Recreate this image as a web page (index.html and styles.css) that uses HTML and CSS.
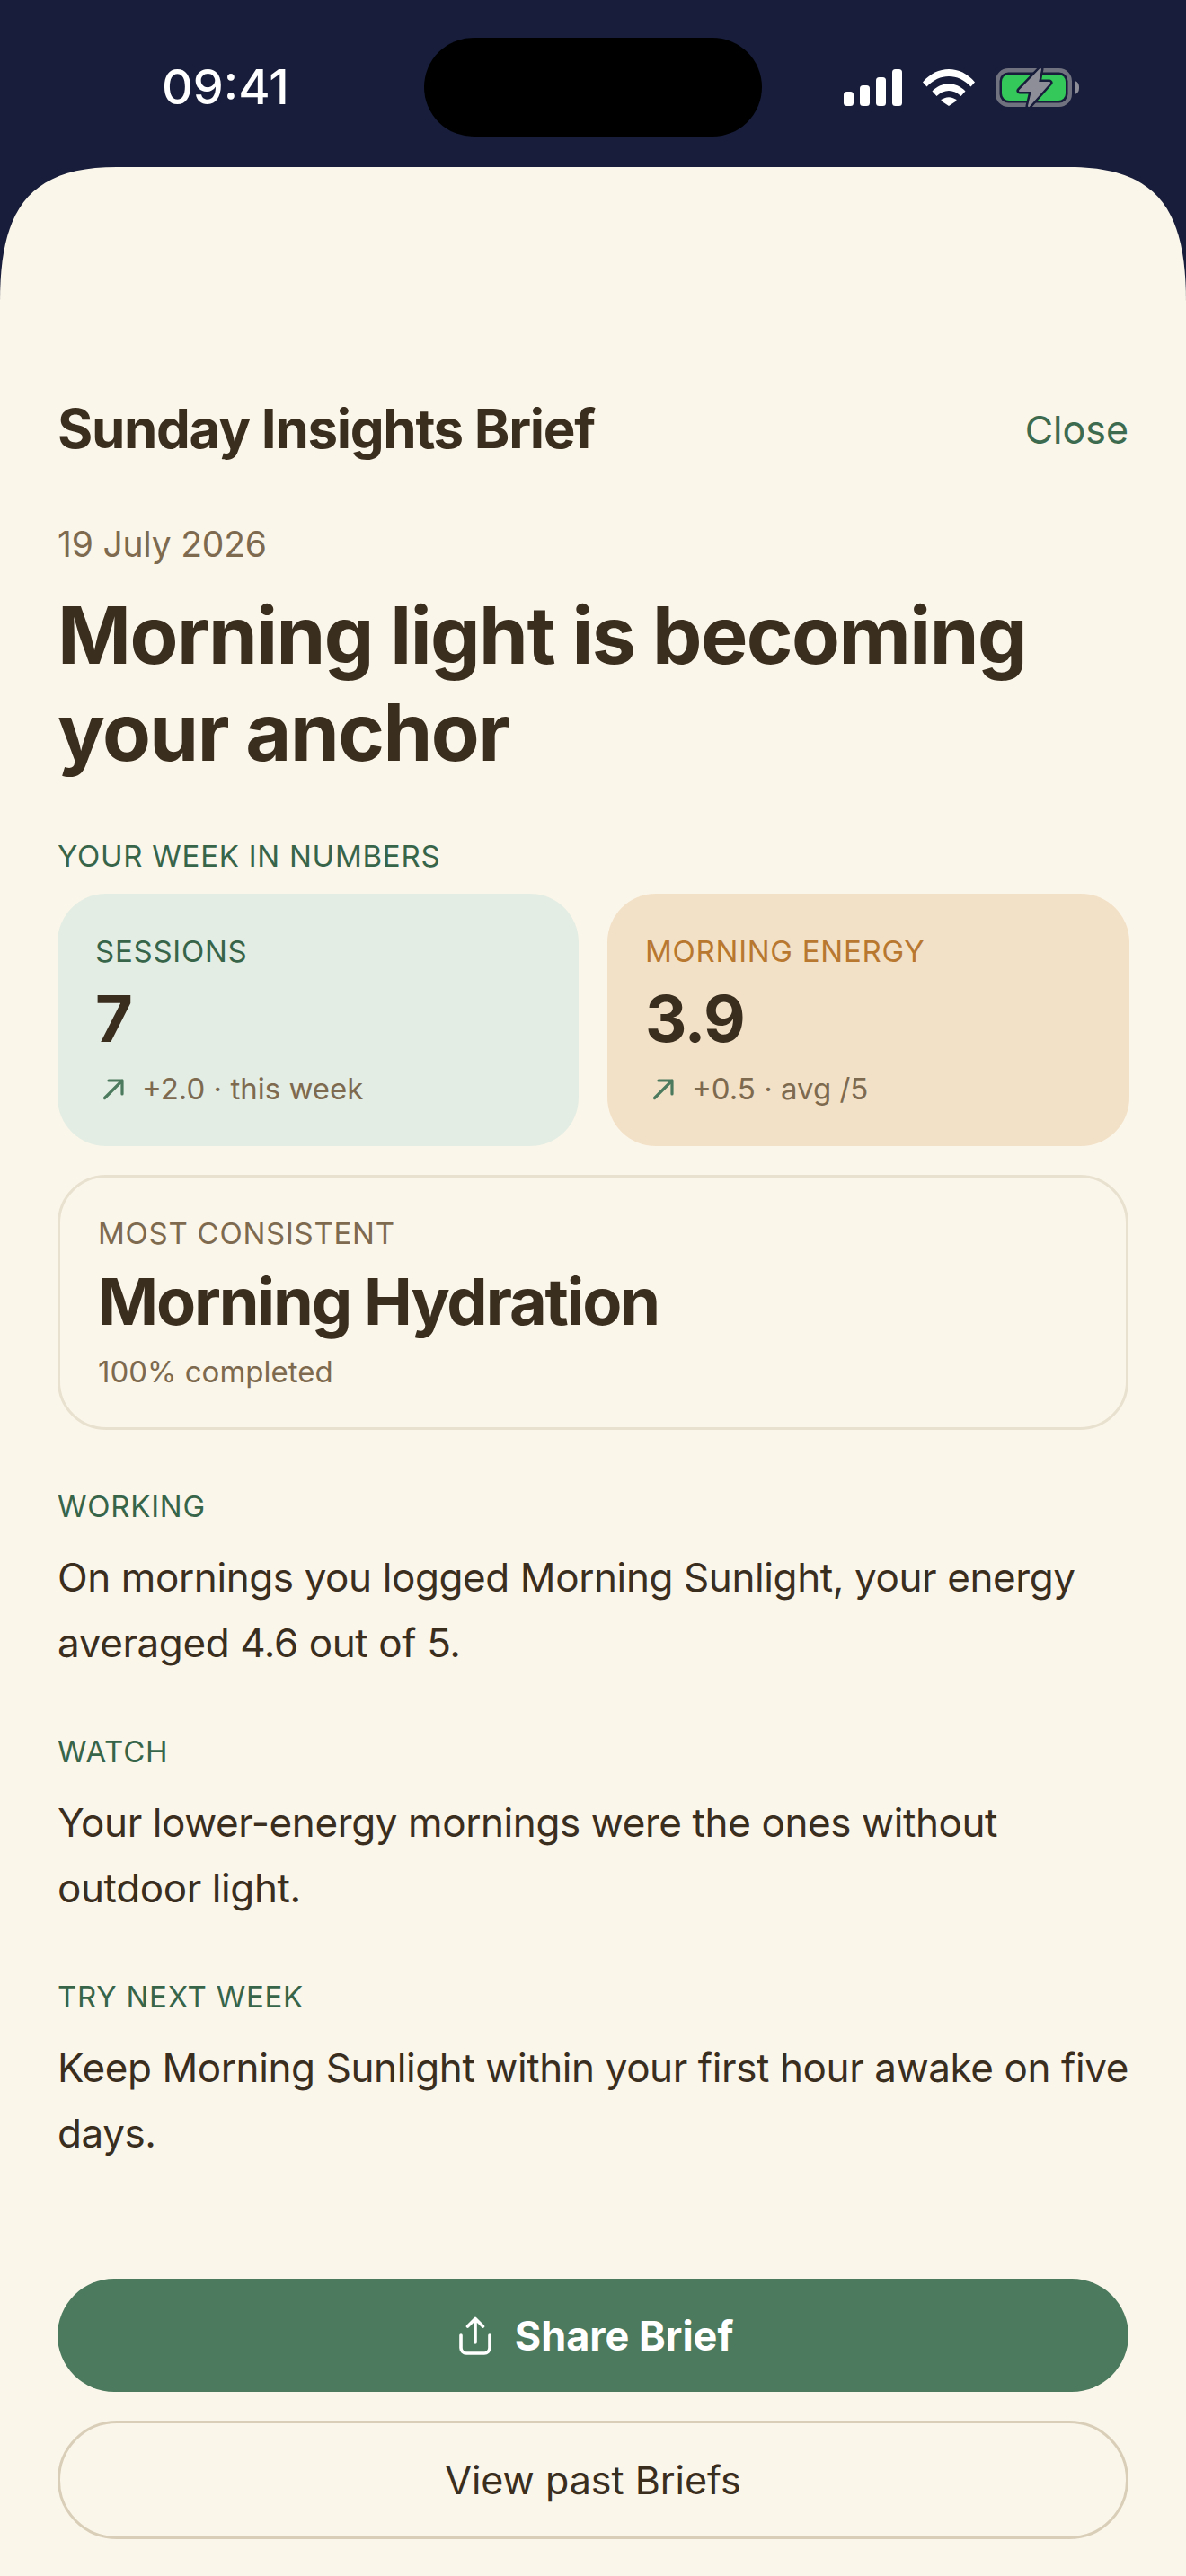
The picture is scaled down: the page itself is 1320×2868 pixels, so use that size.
FILE: index.html
```html
<!DOCTYPE html>
<html lang="en">

<head>
    <meta charset="UTF-8">
    <title>Sunday Insights Brief</title>
    <link rel="stylesheet" href="styles.css">
</head>

<body>
    <div class="status-bar">
        <span class="time">09:41</span>
        <div class="island"></div>
        <div class="status-icons">
            <svg class="icon-signal" width="65" height="41" viewBox="0 0 65 41">
                <rect x="0" y="25" width="11" height="16" rx="3.5" />
                <rect x="18" y="18" width="11" height="23" rx="3.5" />
                <rect x="36" y="9" width="11" height="32" rx="3.5" />
                <rect x="54" y="0" width="11" height="41" rx="3.5" />
            </svg>
            <svg class="icon-wifi" width="58" height="41" viewBox="0 0 58 41">
                <path d="M0 14.500 C16 -4.800 42 -4.800 58 14.500 L53.500 19.500 C39 4.300 19 4.300 4.500 19.500 Z" />
                <path d="M10.500 24.500 C21 13.500 37 13.500 47.500 24.500 L42.500 30 C34.500 22 23.500 22 15.500 30 Z" />
                <path d="M20 35 C25 30 33 30 38 35 L29 41 Z" />
            </svg>
            <svg class="icon-battery" width="94" height="45" viewBox="0 0 94 45">
                <rect x="2.250" y="3.250" width="80.500" height="38.500" rx="12" fill="none" stroke="#71727f" stroke-width="4.500" />
                <path d="M88 15 C92 16 93 19 93 22.500 C93 26 92 29 88 30 Z" fill="#8e8e99" />
                <rect x="7" y="8" width="71" height="29" rx="8" fill="#34c759" />
                <path d="M50 2 27 26H41L37 43 60 17H47Z" fill="#171d3a" stroke="#171d3a" stroke-width="7" stroke-linejoin="round" />
                <path d="M50 2 27 26H41L37 43 60 17H47Z" fill="#8e8e99" stroke="#8e8e99" stroke-width="2" stroke-linejoin="round" />
            </svg>
        </div>
    </div>

    <main class="sheet">
        <div class="sheet-head">
            <h2 class="sheet-title">Sunday Insights Brief</h2>
            <span class="close">Close</span>
        </div>

        <p class="date">19 July 2026</p>
        <h1 class="headline">Morning light is becoming your anchor</h1>

        <p class="label">YOUR WEEK IN NUMBERS</p>
        <div class="stats">
            <div class="stat stat-green">
                <p class="stat-label">SESSIONS</p>
                <p class="stat-value">7</p>
                <div class="stat-note">
                    <svg class="arrow" width="36" height="36" viewBox="0 0 36 36">
                        <path d="M10.500 28.500 30 9M15 9h15v15" />
                    </svg>
                    <span>+2.0 · this week</span>
                </div>
            </div>
            <div class="stat stat-orange">
                <p class="stat-label">MORNING ENERGY</p>
                <p class="stat-value">3.9</p>
                <div class="stat-note">
                    <svg class="arrow" width="36" height="36" viewBox="0 0 36 36">
                        <path d="M10.500 28.500 30 9M15 9h15v15" />
                    </svg>
                    <span>+0.5 · avg /5</span>
                </div>
            </div>
        </div>

        <div class="consistent">
            <p class="consistent-label">MOST CONSISTENT</p>
            <p class="consistent-name">Morning Hydration</p>
            <p class="consistent-note">100% completed</p>
        </div>

        <section class="block">
            <p class="label">WORKING</p>
            <p class="text">On mornings you logged Morning Sunlight, your energy averaged 4.6 out of 5.</p>
        </section>
        <section class="block">
            <p class="label">WATCH</p>
            <p class="text">Your lower-energy mornings were the ones without outdoor light.</p>
        </section>
        <section class="block">
            <p class="label">TRY NEXT WEEK</p>
            <p class="text">Keep Morning Sunlight within your first hour awake on five days.</p>
        </section>

        <div class="actions">
            <button class="btn btn-primary">
                <svg class="share" width="36" height="43" viewBox="0 0 36 43">
                    <path d="M18 29V3M9.500 11 18 2.500 26.500 11M2 21v14a6 6 0 0 0 6 6h20a6 6 0 0 0 6-6V21" />
                </svg>
                Share Brief
            </button>
            <button class="btn btn-secondary">View past Briefs</button>
        </div>
    </main>
</body>

</html>
```

FILE: styles.css
```css
* {
    box-sizing: border-box;
}

body {
    font-family: Inter, 'Noto Sans', sans-serif;
    background-color: #171d3a;
    margin: 0;
    padding: 0;
    width: 1320px;
    height: 2868px;
    overflow: hidden;
    color: #3a2e1f;
}

p,
h1,
h2 {
    margin: 0;
}

.status-bar {
    height: 186px;
    padding-top: 42px;
    display: grid;
    grid-template-columns: 1fr 376px 1fr;
    color: white;
}

.time {
    font-size: 54px;
    font-weight: 500;
    line-height: 110px;
    padding-left: 180px;
}

.island {
    height: 110px;
    background: #000;
    border-radius: 55px;
}

.status-icons {
    display: flex;
    align-items: center;
    justify-content: flex-end;
    gap: 23px;
    height: 110px;
    padding-right: 118px;
    fill: white;
}

.sheet {
    height: 2682px;
    background: #fbf6ea;
    clip-path: path("M0 150C0 50 30 0 130 0H1190C1290 0 1320 50 1320 150V2682H0Z");
    padding: 256px 64px 0;
}

.sheet-head {
    display: flex;
    justify-content: space-between;
    align-items: center;
    height: 70px;
}

.sheet-title {
    font-size: 60px;
    font-weight: 700;
    letter-spacing: -1.3px;
}

.close {
    font-size: 43px;
    color: #3d6b4f;
    padding-top: 2px;
}

.date {
    font-size: 39px;
    letter-spacing: -0.2px;
    color: #7d6a4f;
    margin-top: 70px;
}

.headline {
    font-size: 88px;
    font-weight: 700;
    line-height: 108px;
    letter-spacing: -1.5px;
    margin-top: 24px;
}

.label {
    font-size: 33px;
    letter-spacing: 0.75px;
    color: #37654a;
}

.headline + .label {
    margin-top: 64px;
}

.stats {
    display: grid;
    grid-template-columns: 580px 581px;
    gap: 32px;
    margin-top: 22px;
}

.stat {
    height: 281px;
    border-radius: 54px;
    padding: 44px 42px 0;
}

.stat-green {
    background: #e4ede3;
}

.stat-orange {
    background: #f3e1c7;
}

.stat-label {
    font-size: 33px;
    letter-spacing: 0.75px;
}

.stat-green .stat-label {
    color: #37654a;
}

.stat-orange .stat-label {
    color: #b87830;
}

.stat-value {
    font-size: 72px;
    font-weight: 700;
    line-height: 88px;
    letter-spacing: -1.5px;
    margin-top: 11px;
}

.stat-note {
    display: flex;
    align-items: center;
    gap: 16px;
    margin-top: 14px;
    font-size: 33px;
    color: #7d6a4f;
}

.arrow {
    fill: none;
    stroke: #4c7a5e;
    stroke-width: 3.2;
    stroke-linecap: round;
    stroke-linejoin: round;
}

.consistent {
    height: 284px;
    margin-top: 32px;
    margin-bottom: 65px;
    border: 3px solid #e8e1cf;
    border-radius: 54px;
    padding: 42px 42px 0;
}

.consistent-label {
    font-size: 33px;
    letter-spacing: 0.75px;
    color: #7d6a4f;
}

.consistent-name {
    font-size: 72px;
    font-weight: 700;
    line-height: 88px;
    letter-spacing: -2.1px;
    margin-top: 12px;
}

.consistent-note {
    font-size: 33px;
    color: #7d6a4f;
    margin-top: 14px;
}

.block {
    margin-bottom: 64px;
}

.text {
    font-size: 44px;
    line-height: 73px;
    letter-spacing: -0.4px;
    margin-top: 23px;
}

.actions {
    display: flex;
    flex-direction: column;
    gap: 32px;
    margin-top: 125px;
}

.btn {
    width: 100%;
    font-family: inherit;
    border-radius: 66px;
    display: flex;
    align-items: center;
    justify-content: center;
    cursor: pointer;
}

.btn-primary {
    height: 126px;
    border: none;
    background: #4c7a5e;
    color: white;
    font-size: 45px;
    font-weight: 700;
    gap: 26px;
    padding: 0 0 0 7px;
}

.btn-secondary {
    height: 132px;
    border: 3px solid #d9cfb9;
    background: none;
    color: #3a2e1f;
    font-size: 43px;
}

.share {
    fill: none;
    stroke: white;
    stroke-width: 3.6;
    stroke-linecap: round;
    stroke-linejoin: round;
}
```
